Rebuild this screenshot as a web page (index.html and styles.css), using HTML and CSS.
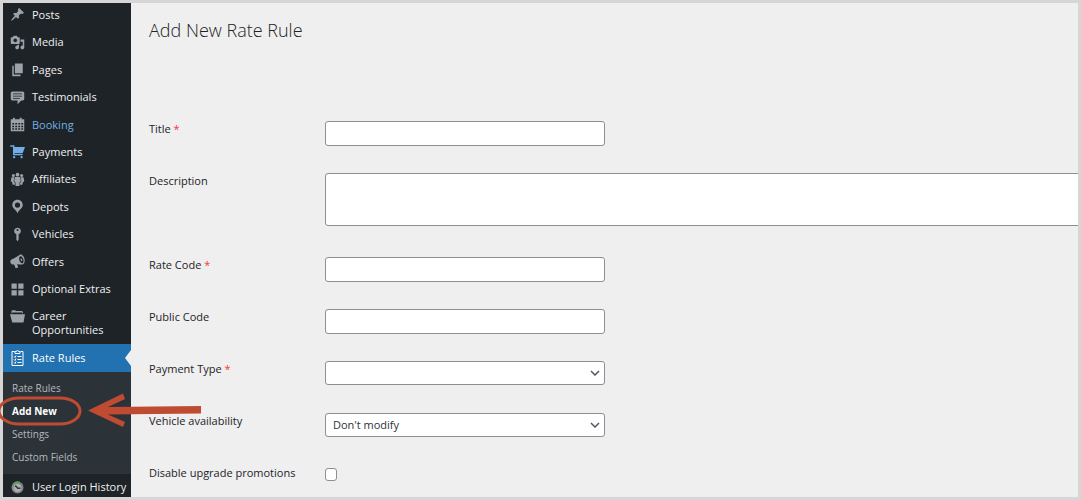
FILE: index.html
```html
<!DOCTYPE html>
<html lang="en">
<head>
<meta charset="utf-8">
<meta name="viewport" content="width=device-width, initial-scale=1">
<title>Add New Rate Rule</title>
<link rel="stylesheet" href="styles.css">
</head>
<body>
<div class="frame">
  <nav class="sidebar" aria-label="Main menu">
    <ul class="menu menu-main">
      <li><a href="#"><svg class="icon" viewBox="0 0 20 20"><path d="M10.44 3.02l1.82-1.82 6.36 6.35-1.83 1.82c-1.05-.68-2.48-.57-3.41.36l-.75.75c-.92.93-1.04 2.35-.35 3.41l-1.83 1.82-2.41-2.41-2.8 2.79c-.42.42-3.38 2.71-3.8 2.29s1.86-3.39 2.28-3.81l2.79-2.79L4.1 9.36l1.83-1.82c1.05.69 2.48.57 3.4-.36l.75-.75c.93-.92 1.05-2.35.36-3.41z"/></svg>Posts</a></li>
      <li><a href="#"><svg class="icon" viewBox="0 0 20 20"><path fill-rule="evenodd" d="M13 11V4c0-.55-.45-1-1-1h-1.67L9 1H5L3.67 3H2c-.55 0-1 .45-1 1v7c0 .55.45 1 1 1h10c.55 0 1-.45 1-1zM7 4.5c1.38 0 2.5 1.12 2.5 2.5S8.38 9.5 7 9.5 4.5 8.38 4.5 7 5.62 4.5 7 4.5zM14 6h5v10.5c0 1.38-1.12 2.5-2.5 2.5S14 17.88 14 16.5s1.12-2.5 2.5-2.5c.17 0 .34.02.5.05V9h-3V6zm-4 8.05V13h2v3.5c0 1.38-1.12 2.5-2.5 2.5S7 17.88 7 16.5 8.120 14 9.500 14c.17 0 .34.02.5.05z"/></svg>Media</a></li>
      <li><a href="#"><svg class="icon" viewBox="0 0 20 20"><path d="M6.500 15V2H17v13H6.500zM5 16.500h9V19H3V5h2v11.500z"/></svg>Pages</a></li>
      <li><a href="#"><svg class="icon" viewBox="0 0 20 20"><path fill-rule="evenodd" d="M3 2h14c1 0 2 1 2 2v8c0 1-1 2-2 2h-2l-5 5v-5H3c-1 0-2-1-2-2V4c0-1 1-2 2-2zm13 2.500H4v1.300h12V4.500zm0 3H4v1.300h12V7.500zm-3 3H4v1.300h9v-1.300z"/></svg>Testimonials</a></li>
      <li><a class="highlight" href="#"><svg class="icon" viewBox="0 0 20 20"><path fill-rule="evenodd" d="M4 1h2.500v2H13V1h2.500v2H19v16H1V3h3V1zM3 8v2h2.500V8H3zm4 0v2h2.500V8H7zm4 0v2h2.500V8H11zm4 0v2h2.500V8H15zM3 11.500v2h2.500v-2H3zm4 0v2h2.500v-2H7zm4 0v2h2.500v-2H11zm4 0v2h2.500v-2H15zM3 15v2h2.500v-2H3zm4 0v2h2.500v-2H7zm4 0v2h2.500v-2H11zm4 0v2h2.500v-2H15z"/></svg>Booking</a></li>
      <li><a class="hovered" href="#"><svg class="icon" viewBox="0 0 20 20"><path d="M6 13h10c.55 0 1 .45 1 1s-.45 1-1 1H5c-.55 0-1-.45-1-1V3.500H1c-.55 0-1-.45-1-1s.45-1 1-1h4c.55 0 1 .45 1 1V4h14l-3 8H6v1zm-.5 3c.83 0 1.500.67 1.500 1.500S6.330 19 5.500 19 4 18.330 4 17.500 4.670 16 5.500 16zm10 0c.83 0 1.500.67 1.500 1.500s-.67 1.500-1.500 1.500-1.500-.67-1.500-1.500.67-1.500 1.500-1.500z"/></svg>Payments</a></li>
      <li><a href="#"><svg class="icon" viewBox="0 0 20 20"><circle cx="10" cy="3.500" r="2.500"/><circle cx="4.500" cy="4.500" r="2"/><circle cx="15.500" cy="4.500" r="2"/><path d="M6.800 6.500h6.400l1.300 5.500-1.800 2v4.500H7.300V14l-1.800-2zM2 7h4l-1.200 5 1.700 2.500V17h-3L3 14l-2-2zM14 7h4l1 5-2 2-.5 3h-3v-2.500l1.700-2.500z"/></svg>Affiliates</a></li>
      <li><a href="#"><svg class="icon" viewBox="0 0 20 20"><path fill-rule="evenodd" d="M10 1C6.100 1 3 4 3 8c0 4.500 5 6 7 11 2-5 7-6.500 7-11 0-4-3.100-7-7-7zm0 3.500a3.500 3.500 0 1 1 0 7 3.500 3.500 0 0 1 0-7z"/></svg>Depots</a></li>
      <li><a href="#"><svg class="icon" viewBox="0 0 20 20"><path fill-rule="evenodd" d="M10 1a4.500 4.500 0 0 1 1.500 8.700V17L10 19l-1.500-2V9.700A4.500 4.500 0 0 1 10 1zm0 1.800a1.300 1.300 0 1 0 0 2.600 1.300 1.300 0 0 0 0-2.600z"/></svg>Vehicles</a></li>
      <li><a href="#"><svg class="icon" viewBox="0 0 20 20"><path fill-rule="evenodd" d="M13 1c3-1 6 2.500 6.500 6.500.4 3.500-1 6-3 6.500-2 .3-4.500-.5-7-.3l1.500 4.300-3.500 1-2-5c-2 .5-4-.5-4.800-2.500C0 9.500.8 7.800 2.500 7 7 5 10 3 13 1zm.7 2c-1.700.7-2 3.500-1 6s2.800 4 4.200 3.200c1.300-.8 1.500-3.500.6-5.800-.9-2.300-2.500-3.900-3.800-3.400zm.3 3c1-.5 2 .2 2.300 1.200.3 1.100-.1 2-1.100 2.300-.7-.8-1.200-2.200-1.200-3.500z"/></svg>Offers</a></li>
      <li><a href="#"><svg class="icon" viewBox="0 0 20 20"><path d="M2 2h7v7H2zM11 2h7v7h-7zM2 11h7v7H2zM11 11h7v7h-7z"/></svg>Optional Extras</a></li>
    </ul>
    <ul class="menu">
      <li><a class="two-line" href="#"><svg class="icon" viewBox="0 0 20 20"><path d="M2 6V2.500l1-1h4l1 1h8l1 1V6h-1V4.500H3V6zM0 7h20l-2 11H3z"/></svg>Career Opportunities</a></li>
      <li><a class="current" href="#" aria-current="true"><svg class="icon clip" viewBox="0 0 14 18" fill="none" stroke="currentColor"><path d="M4 2.500H1.500v14h11v-14H10M4.500 4.500v-2H6a1 1 0 0 1 2 0h1.500v2z"/><path d="M3.500 7.500l1 1 1-2M7 7.500h4M3.500 10.500l1 1 1-2M7 10.500h4M3.500 13.500l1 1 1-2M7 13.500h4"/></svg>Rate Rules</a>
        <ul class="submenu">
          <li><a href="#">Rate Rules</a></li>
          <li><a class="selected" href="#">Add New</a></li>
          <li><a href="#">Settings</a></li>
          <li><a href="#">Custom Fields</a></li>
        </ul>
      </li>
      <li><a class="last" href="#"><svg class="icon" viewBox="0 0 20 20"><circle cx="10" cy="10" r="8" fill="#7c8287"/><path d="M4 4.500A8 8 0 0 1 14 2.800L10 6z" fill="#5d9c58"/><circle cx="10" cy="10.500" r="5.500" fill="#a9adb0"/><path d="M7 7.500l3.500 3.500H14" fill="none" stroke="#34393d" stroke-width="2"/></svg>User Login History</a></li>
    </ul>
  </nav>

  <main class="content">
    <h1>Add New Rate Rule</h1>
    <form class="form">
      <label for="title">Title <span class="required">*</span></label>
      <input class="field" id="title" type="text" required>
      <label for="description">Description</label>
      <textarea class="field area" id="description"></textarea>
      <label for="rate-code">Rate Code <span class="required">*</span></label>
      <input class="field" id="rate-code" type="text" required>
      <label for="public-code">Public Code</label>
      <input class="field" id="public-code" type="text">
      <label for="payment-type">Payment Type <span class="required">*</span></label>
      <div class="select-wrap">
        <select class="field" id="payment-type" required><option></option></select>
        <svg class="chevron" viewBox="0 0 10 6"><path d="M1 1l4 4 4-4"/></svg>
      </div>
      <label for="availability">Vehicle availability</label>
      <div class="select-wrap">
        <select class="field" id="availability"><option>Don't modify</option></select>
        <svg class="chevron" viewBox="0 0 10 6"><path d="M1 1l4 4 4-4"/></svg>
      </div>
      <label for="promotions">Disable upgrade promotions</label>
      <input class="check" id="promotions" type="checkbox">
    </form>
  </main>
</div>
<svg class="annotation" width="204" height="40" viewBox="0 0 204 40" aria-hidden="true">
  <rect x="-1" y="8" width="81" height="26" rx="20" ry="13" fill="none" stroke="#bf4b32" stroke-width="3"/>
  <path d="M88 20.500L123 3.500 125 9 108 17 201 16v7.500L108 24.500l17 7.500-2 5z" fill="#bf4b32"/>
</svg>
</body>
</html>
```
FILE: styles.css
```css
* {
  box-sizing: border-box;
}

body {
  margin: 0;
  background: #efefef;
  color: #1d2327;
  font-family: "Open Sans", "Noto Sans", sans-serif;
  font-size: 11px;
  line-height: 14px;
}

.frame {
  display: flex;
  height: 100vh;
  border: 3px solid #d6d6d6;
  overflow: hidden;
}

.sidebar {
  flex: 0 0 128px;
  background: #1d2327;
}

.menu,
.submenu {
  margin: 0;
  padding: 0;
  list-style: none;
}

.menu-main {
  display: grid;
  grid-auto-rows: 1fr;
  height: 302px;
  margin-top: -2px;
}

.menu a {
  display: flex;
  align-items: center;
  gap: 7px;
  height: 100%;
  padding: 0 0 0 7px;
  color: #f0f0f1;
  text-decoration: none;
}

.icon {
  flex: none;
  width: 15px;
  height: 15px;
  fill: #9ca2a7;
}

.menu .highlight {
  color: #72aee6;
}

.menu .hovered .icon {
  fill: #72aee6;
}

.menu .two-line {
  align-items: flex-start;
  height: auto;
  padding-top: 6px;
  padding-bottom: 7px;
}

.menu .current {
  position: relative;
  height: 28px;
  background: #2271b1;
  color: #fff;
}

.menu .clip {
  height: 18px;
  fill: none;
}

.current::after {
  content: "";
  position: absolute;
  top: 6px;
  right: 0;
  border: 8px solid transparent;
  border-right: 6px solid #efefef;
  border-left: 0;
}

.submenu {
  padding: 4px 0 6px;
  background: #2c3338;
  font-size: 10px;
}

.submenu a {
  height: 23px;
  padding-left: 9px;
  color: #b5b9bd;
}

.submenu .selected {
  color: #fff;
  font-weight: 700;
}

.menu .last {
  height: 26px;
  white-space: nowrap;
}

.content {
  flex: 1;
  min-width: 0;
  padding: 15px 0 0 18px;
}

h1 {
  margin: 0 0 79px;
  font-size: 18px;
  font-weight: 300;
  line-height: 24px;
}

.form {
  display: grid;
  grid-template-columns: 176px 1fr;
  row-gap: 27px;
  align-items: start;
}

.form label {
  padding-top: 1px;
}

.required {
  color: #f33;
}

.field {
  display: block;
  width: 280px;
  height: 25px;
  margin: 0;
  padding: 0 7px;
  border: 1px solid #8c8f94;
  border-radius: 3px;
  background: #fff;
  color: #2c3338;
  font: inherit;
}

.area {
  width: calc(100% + 8px);
  height: 53px;
  margin-bottom: 4px;
  resize: none;
}

.select-wrap {
  position: relative;
  width: 280px;
}

select.field {
  height: 24px;
  margin-bottom: 1px;
  appearance: none;
}

.chevron {
  position: absolute;
  top: 9px;
  right: 5px;
  width: 10px;
  height: 6px;
  fill: none;
  stroke: #50575e;
  stroke-width: 1.5;
  pointer-events: none;
}

.check {
  appearance: none;
  width: 12px;
  height: 13px;
  margin: 3px 0 0;
  border: 1px solid #8c8f94;
  border-radius: 3px;
  background: #fff;
}

.annotation {
  position: absolute;
  top: 390px;
  left: 0;
  pointer-events: none;
}
```
